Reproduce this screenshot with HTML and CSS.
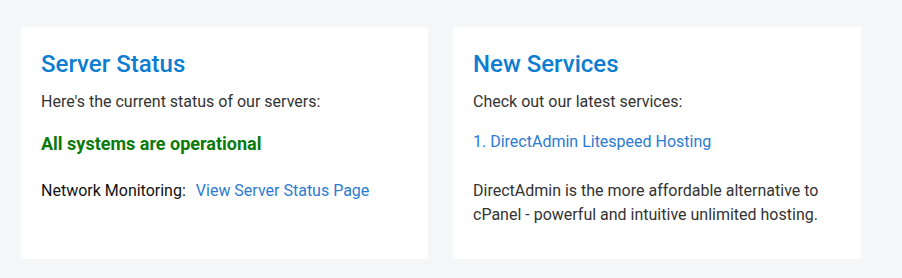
FILE: index.html
```html
<!DOCTYPE html>
<html lang="en">
<head>
<meta charset="utf-8">
<title>Status</title>
<link rel="stylesheet" href="styles.css">
</head>
<body>
<div class="wrap">
  <section class="card">
    <h2 class="card-title">Server Status</h2>
    <p class="lead">Here's the current status of our servers:</p>
    <p class="ok">All systems are operational</p>
    <p class="monitor"><span class="label">Network Monitoring:</span><a class="link" href="#">View Server Status Page</a></p>
  </section>
  <section class="card card-wide">
    <h2 class="card-title">New Services</h2>
    <p class="lead">Check out our latest services:</p>
    <p class="service"><a class="link" href="#">1. DirectAdmin Litespeed Hosting</a></p>
    <p class="desc">DirectAdmin is the more affordable alternative to cPanel - powerful and intuitive unlimited hosting.</p>
  </section>
</div>
</body>
</html>
```

FILE: styles.css
```css
html, body {
  margin: 0;
  padding: 0;
  background: #f5f6f8;
  font-family: Roboto, "Liberation Sans", Arial, sans-serif;
  font-size: 16px;
  line-height: 24px;
  color: #333;
}
.wrap {
  display: flex;
  gap: 25px;
  padding: 27px 41px 20px 21px;
}
.card {
  flex: 0 0 407px;
  box-sizing: border-box;
  background: #fff;
  padding: 23px 20px 32px;
}
.card-wide {
  flex-basis: 408px;
}
.card-title {
  margin: 0 0 11px;
  font-size: 24px;
  line-height: 28.8px;
  font-weight: 500;
  color: #0c7dd1;
}
.lead {
  margin: 0 0 16px;
}
.ok {
  margin: 0 0 22px;
  font-size: 18px;
  line-height: 27px;
  font-weight: 700;
  color: #0a7a0a;
}
.monitor {
  margin: 0;
  color: #111;
}
.label {
  margin-right: 10px;
}
.link {
  color: #2b7bd3;
  text-decoration: none;
}
.service {
  margin: 0 0 25px;
}
.desc {
  margin: 0;
}
```
